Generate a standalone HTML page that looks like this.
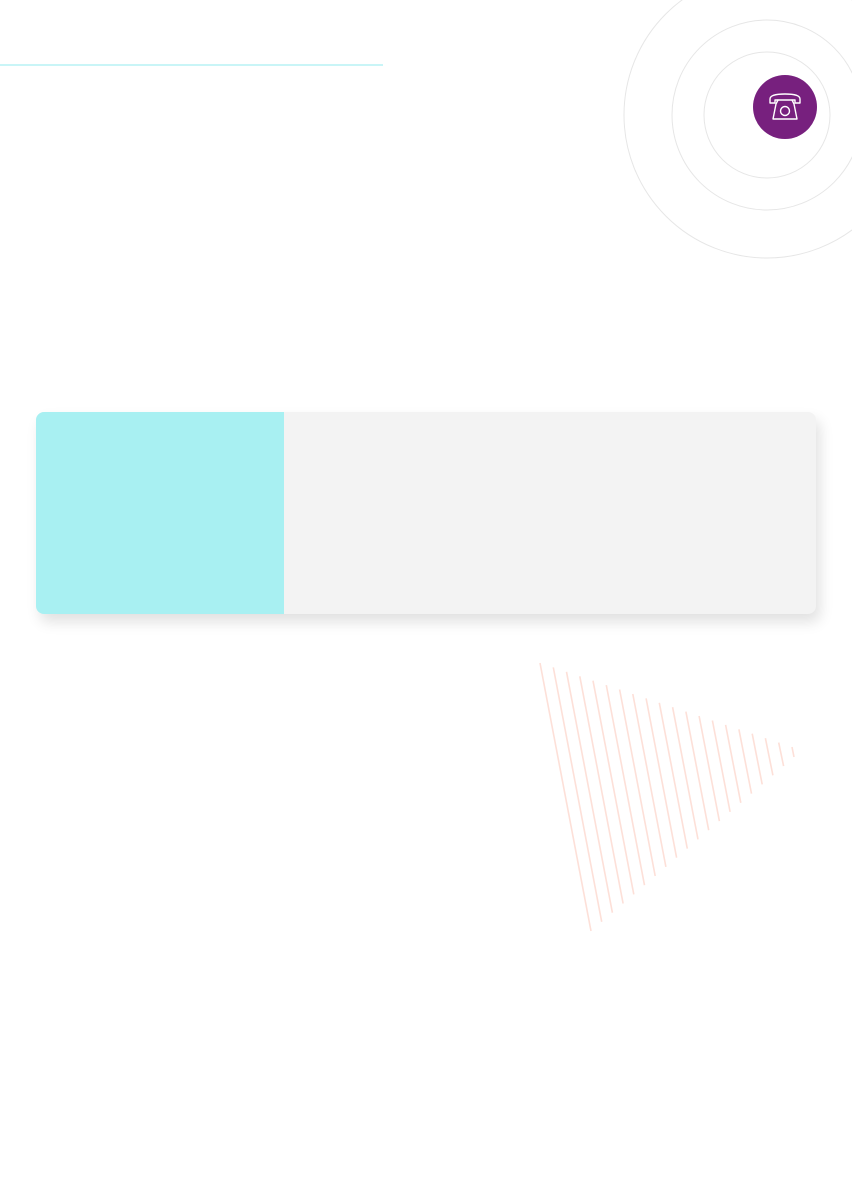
<!DOCTYPE html>
<html><head><style>
html,body{margin:0;padding:0;background:#fff;width:852px;height:1204px;overflow:hidden;position:relative}
.card{position:absolute;left:36px;top:412px;width:780px;height:202px;border-radius:8px;background:#f3f3f3;box-shadow:4px 8px 14px rgba(0,0,0,0.12);overflow:hidden}
.card .l{position:absolute;left:0;top:0;width:248px;height:100%;background:#a8f0f2}
</style></head><body>
<div style="position:absolute;left:0;top:64px;width:383px;height:2px;background:#c9f5f7"></div>
<svg width="852" height="1204" style="position:absolute;left:0;top:0">
<circle cx="767" cy="115" r="63" fill="none" stroke="#e6e6e6" stroke-width="1"/>
<circle cx="767" cy="115" r="95" fill="none" stroke="#e6e6e6" stroke-width="1"/>
<circle cx="767" cy="115" r="143" fill="none" stroke="#e6e6e6" stroke-width="1"/>
<circle cx="785" cy="107" r="32" fill="#77207e"/>
<g fill="none" stroke="#fff" stroke-width="1.4" stroke-linejoin="round" stroke-linecap="round">
<path d="M770 103 v-4 q0-5 15-5 q15 0 15 5 v4 h-5 v-3 h-20 v3 z"/>
<path d="M778 100 l-2 4 l-3 15 h24 l-3-15 l-2-4"/>
<circle cx="785" cy="111" r="4.5"/>
</g>
<g stroke="#fde0d8" stroke-width="1.6">
<line x1="540" y1="663" x2="591" y2="931"/><line x1="553.3" y1="667.4" x2="601.7" y2="921.8"/><line x1="566.5" y1="671.8" x2="612.4" y2="912.7"/><line x1="579.8" y1="676.3" x2="623.1" y2="903.5"/><line x1="593" y1="680.7" x2="633.8" y2="894.4"/><line x1="606.3" y1="685.1" x2="644.5" y2="885.2"/><line x1="619.6" y1="689.5" x2="655.2" y2="876"/><line x1="632.8" y1="694" x2="665.9" y2="866.9"/><line x1="646.1" y1="698.4" x2="676.6" y2="857.7"/><line x1="659.3" y1="702.8" x2="687.3" y2="848.6"/><line x1="672.6" y1="707.2" x2="698" y2="839.4"/><line x1="685.9" y1="711.6" x2="708.7" y2="830.2"/><line x1="699.1" y1="716" x2="719.4" y2="821.1"/><line x1="712.4" y1="720.5" x2="730.1" y2="811.9"/><line x1="725.6" y1="724.9" x2="740.8" y2="802.8"/><line x1="738.9" y1="729.3" x2="751.5" y2="793.6"/><line x1="752.2" y1="733.7" x2="762.2" y2="784.4"/><line x1="765.4" y1="738.2" x2="772.9" y2="775.3"/><line x1="778.7" y1="742.6" x2="783.6" y2="766.1"/><line x1="792" y1="747" x2="794" y2="757"/>
</g>
</svg>
<div class="card"><div class="l"></div></div>
</body></html>
